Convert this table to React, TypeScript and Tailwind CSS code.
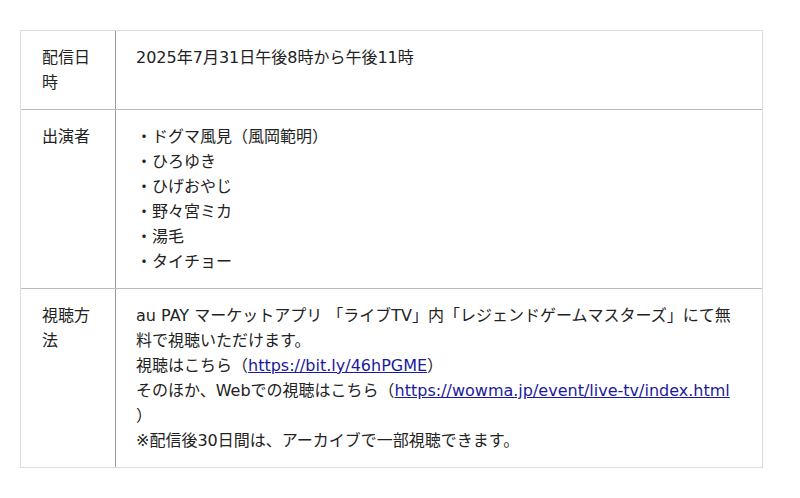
import React from "react";

const font = { fontFamily: '"DejaVu Sans", "Noto Sans CJK JP", sans-serif' };

export default function App() {
  return (
    <div className="bg-white w-[800px] h-[498px] pt-[30px] pl-[20px] text-[#222] text-[16px] leading-[25px]" style={font}>
      <div className="w-[743px] border border-[#ddd]">
        <div className="flex">
          <div className="w-[95px] shrink-0 border-r border-[#999] pl-[21px] pr-[21px] py-[14px]">配信日時</div>
          <div className="flex-1 pl-[20px] pr-[20px] py-[14px]">2025年7月31日午後8時から午後11時</div>
        </div>
        <div className="flex border-t border-[#bbb]">
          <div className="w-[95px] shrink-0 border-r border-[#999] pl-[21px] pr-[21px] py-[14px]">出演者</div>
          <div className="flex-1 pl-[20px] pr-[20px] py-[14px]">
            <div>・ドグマ風見（風岡範明）</div>
            <div>・ひろゆき</div>
            <div>・ひげおやじ</div>
            <div>・野々宮ミカ</div>
            <div>・湯毛</div>
            <div>・タイチョー</div>
          </div>
        </div>
        <div className="flex border-t border-[#bbb]">
          <div className="w-[95px] shrink-0 border-r border-[#999] pl-[21px] pr-[21px] py-[14px]">視聴方法</div>
          <div className="flex-1 pl-[20px] pr-[20px] py-[14px]">
            <div>au PAY マーケットアプリ 「ライブTV」内「レジェンドゲームマスターズ」にて無料で視聴いただけます。</div>
            <div>
              視聴はこちら（<a href="#" className="text-[#1a1a9c] underline">https://bit.ly/46hPGME</a>）
            </div>
            <div>
              そのほか、Webでの視聴はこちら（<a href="#" className="text-[#1a1a9c] underline whitespace-nowrap">https://wowma.jp/event/live-tv/index.html</a>
            </div>
            <div>）</div>
            <div>※配信後30日間は、アーカイブで一部視聴できます。</div>
          </div>
        </div>
      </div>
    </div>
  );
}
